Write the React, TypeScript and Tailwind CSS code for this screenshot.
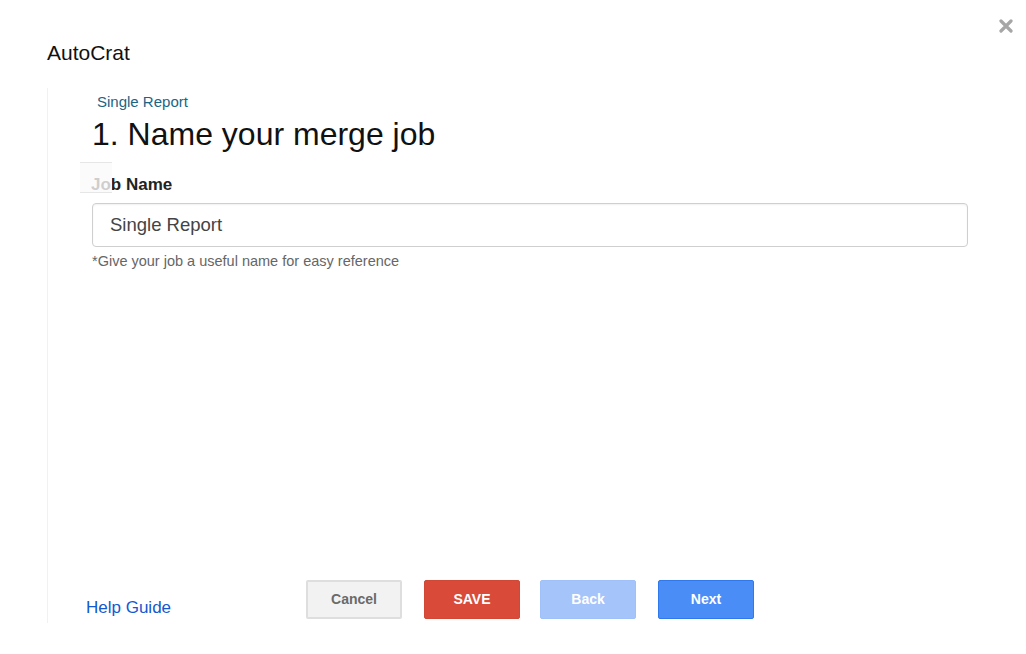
import React from "react";

export default function App() {
  return (
    <div
      className="relative w-[1026px] h-[654px] bg-white overflow-hidden"
      style={{ fontFamily: '"Liberation Sans", Arial, Helvetica, sans-serif' }}
    >
      {/* close button */}
      <button className="absolute left-[998px] top-[18px] w-[16px] h-[16px] flex items-center justify-center" aria-label="Close">
        <svg width="14" height="14" viewBox="0 0 14 14">
          <path d="M2 2 L12 12 M12 2 L2 12" stroke="#a6a6a6" strokeWidth="3.2" strokeLinecap="round" />
        </svg>
      </button>

      <div className="pt-[42px] pl-[47px]">
        <div className="text-[21px] leading-[21px] text-[#111]">AutoCrat</div>

        <div className="mt-[25px] h-[535px] border-l border-[#f1f1f1] pl-[44px] flex flex-col">
          <div className="pt-[6px] ml-[5px] text-[15px] leading-[15px] text-[#1b6584]">Single Report</div>
          <h1 className="mt-[9px] ml-0 text-[32px] leading-[32px] text-[#111] font-normal">
            1. Name your merge job
          </h1>

          <div className="relative mt-[12px] h-[31px] pt-[14px]">
            <div className="text-[17px] leading-[17px] font-bold text-[#222] -ml-[1px]">Job Name</div>
            <div className="absolute left-[-12px] top-0 w-[32px] h-[31px] border-y border-[#e6e6e6] bg-[rgba(250,250,250,0.8)]" />
          </div>

          <div className="mt-[10px] w-[876px] h-[44px] rounded-[4px] border-[1.5px] border-[#cfcfcf] shadow-[inset_0_1px_2px_rgba(0,0,0,0.06)] flex items-center pl-[17px]">
            <span className="text-[18.5px] text-[#444]">Single Report</span>
          </div>

          <div className="mt-[7px] text-[14.5px] leading-[14.5px] text-[#666]">
            *Give your job a useful name for easy reference
          </div>

          <div className="mt-auto mb-[4px] flex items-start">
            <a className="-ml-[6px] w-[220px] mt-[19px] text-[17px] leading-[17px] text-[#1558d0] cursor-pointer">
              Help Guide
            </a>
            <div className="flex">
              <button className="w-[96px] h-[39px] rounded-[2px] border-2 border-[#dedede] bg-[#f2f2f2] text-[14px] font-bold text-[#6a6a6a]">
                Cancel
              </button>
              <button className="ml-[22px] w-[96px] h-[39px] rounded-[2px] border border-[#d14836] bg-[#d94a38] text-[14px] font-bold text-white">
                SAVE
              </button>
              <button className="ml-[20px] w-[96px] h-[39px] rounded-[2px] border border-[#9fc0f8] bg-[#a5c4f9] text-[14px] font-bold text-white">
                Back
              </button>
              <button className="ml-[22px] w-[96px] h-[39px] rounded-[2px] border border-[#3079ed] bg-[#4a8df6] text-[14px] font-bold text-white">
                Next
              </button>
            </div>
          </div>
        </div>
      </div>
    </div>
  );
}
